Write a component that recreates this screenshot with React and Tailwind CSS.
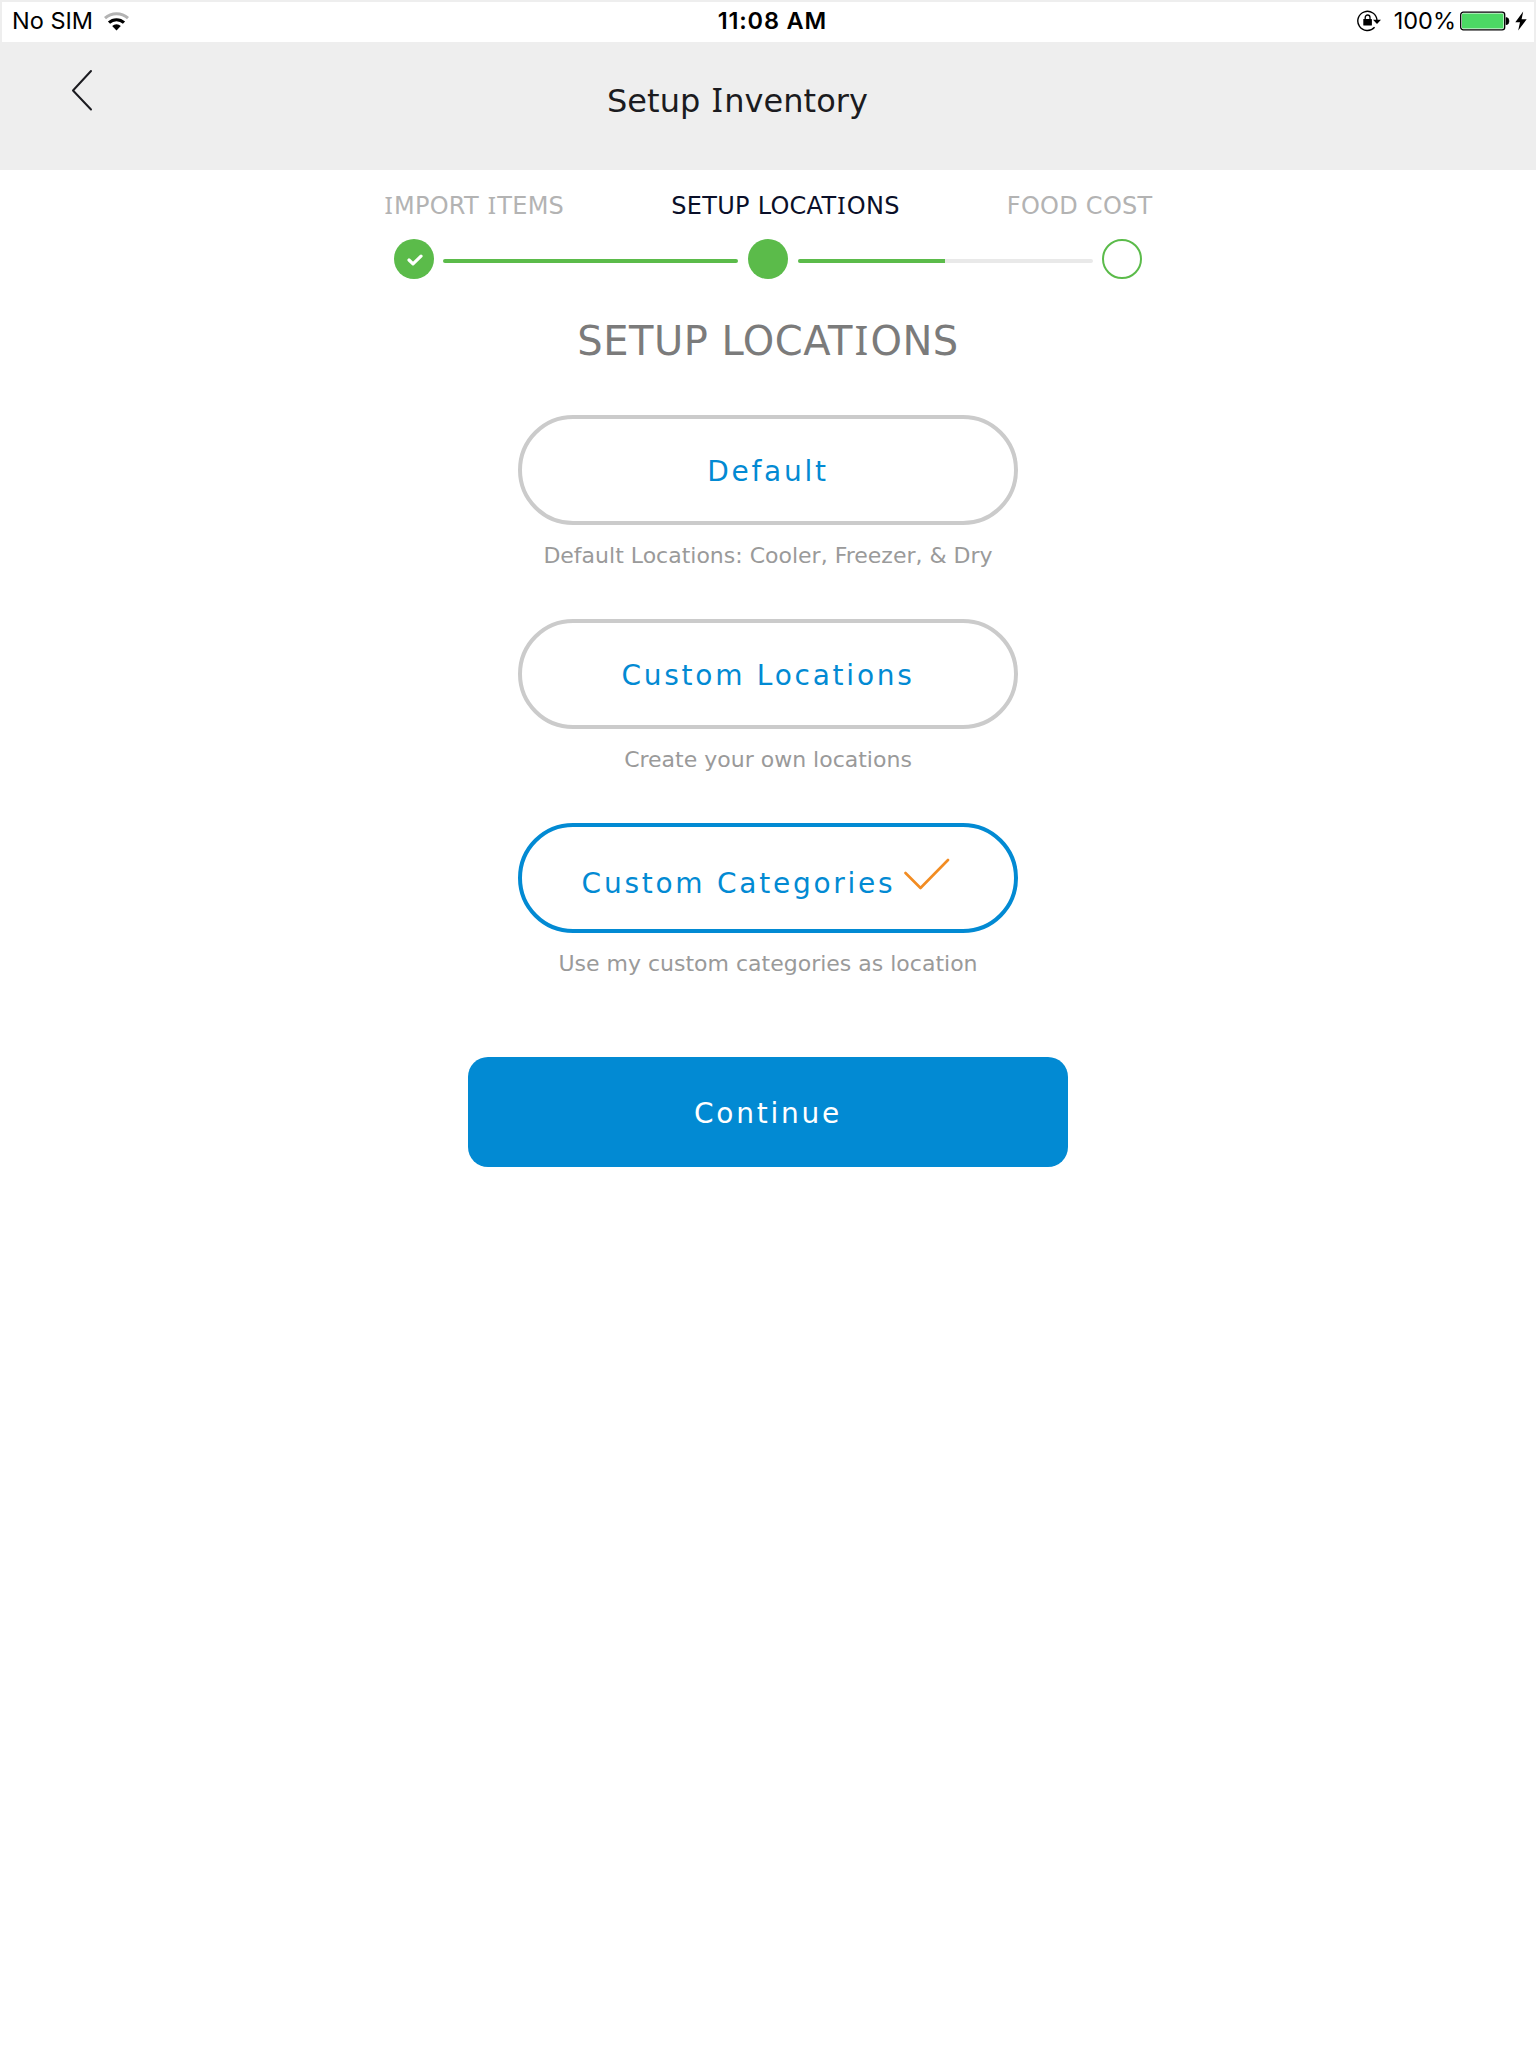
function Wifi() {
  return (
    <svg className="mb-[2px] ml-[11px] h-[19px] w-[25px]" viewBox="0 0 25 19" fill="none">
      <path d="M1 6.2A17 17 0 0 1 24 6.2" stroke="#b3b3b3" strokeWidth="3" />
      <path d="M5 10.7A11 11 0 0 1 20 10.7" stroke="#000" strokeWidth="3.2" />
      <path d="M12.5 18.5L8.2 14A6 6 0 0 1 16.8 14Z" fill="#000" />
    </svg>
  );
}

function RotationLock() {
  return (
    <svg className="mb-[2px] h-[22px] w-[24px]" viewBox="0 0 24 22" fill="none">
      <path d="M17.6 17.3A9.6 9.6 0 1 1 20 10.5" stroke="#000" strokeWidth="1.4" />
      <path d="M16 9.8H24L20 14Z" fill="#000" />
      <rect x="6.3" y="9" width="8.6" height="6.6" rx="0.6" fill="#000" />
      <path d="M8.2 9.5V7.4a2.4 2.4 0 0 1 4.8 0V9.5" stroke="#000" strokeWidth="1.3" />
    </svg>
  );
}

function Battery() {
  return (
    <svg className="mb-[2px] ml-[4px] h-[20px] w-[50px]" viewBox="0 0 50 20" fill="none">
      <rect x="0.7" y="1.2" width="44" height="17.6" rx="2.6" stroke="#000" strokeWidth="1.3" />
      <rect x="2" y="2.5" width="41.4" height="15" rx="1" fill="#4cd964" />
      <path d="M46 6.5a3 3.6 0 0 1 0 7.2Z" fill="#000" stroke="#000" strokeWidth="0.6" />
    </svg>
  );
}

function Bolt() {
  return (
    <svg className="mb-[2px] ml-[5px] h-[20px] w-[12px]" viewBox="0 0 12 20">
      <path d="M8.2 0.5L0.3 11.2H5L3.2 19.5L11.7 8.2H6.6Z" fill="#000" />
    </svg>
  );
}

function StatusBar() {
  return (
    <div className="mx-[2px] grid h-[40px] grid-cols-3 items-center bg-white font-['Inter',sans-serif] text-[23.5px] leading-[38px] text-black">
      <div className="flex items-center pl-[10px]">
        <span className="-mt-[2px]">No SIM</span>
        <Wifi />
      </div>
      <div className="-mt-[2px] pl-[205px] font-semibold tracking-[0.85px]">11:08 AM</div>
      <div className="flex items-center justify-end pr-[7px]">
        <RotationLock />
        <span className="-mt-[2px] ml-[13px]">100%</span>
        <Battery />
        <Bolt />
      </div>
    </div>
  );
}

function Slab({ children }) {
  return children.split(/(I)/).map((part, i) =>
    part === "I" ? (
      <span key={i} className="px-[0.038em] font-['Noto_Sans',sans-serif] text-[1.02em] leading-none">
        I
      </span>
    ) : (
      part
    )
  );
}

function Option({ label, note, selected }) {
  return (
    <div className="flex flex-col items-center">
      <button
        className={
          "flex h-[110px] w-[500px] items-start justify-center rounded-full border-4 text-[28px] leading-[36px] tracking-[2.75px] text-[#028ad3] " +
          (selected ? "border-[#028ad3] pt-[39px]" : "border-[#cbcbcb] pt-[35px]")
        }
      >
        <span>{label}</span>
        {selected && (
          <svg className="-mt-[8px] mr-[4px] ml-[9px] h-[32px] w-[46px]" viewBox="0 0 46 32" fill="none">
            <path d="M1.5 15L16.5 30L44 2" stroke="#f28c22" strokeWidth="2.6" strokeLinecap="round" strokeLinejoin="round" />
          </svg>
        )}
      </button>
      <p className="mt-[17px] text-[22px] leading-[28px] text-[#9a9a9a]">{note}</p>
    </div>
  );
}

export default function App() {
  return (
    <div className="min-h-[2048px] w-[1536px] bg-white font-['DejaVu_Sans',sans-serif] antialiased">
      <header className="h-[170px] bg-[#eeeeee] pt-[2px]">
        <StatusBar />
        <div className="flex h-[128px] items-start">
          <svg className="mt-[27px] ml-[71px] h-[42px] w-[22px]" viewBox="0 0 22 42" fill="none">
            <path d="M20 2L2 21.5L20 40.5" stroke="#1b1b20" strokeWidth="2" strokeLinecap="round" strokeLinejoin="round" />
          </svg>
          <h1 className="mt-[39px] ml-[514px] text-[32px] leading-[40px] tracking-[0.05px] whitespace-nowrap text-[#1b1b20]">
            <Slab>Setup Inventory</Slab>
          </h1>
        </div>
      </header>
      <main className="flex flex-col items-center">
        <div className="mt-5 flex h-[32px] w-[769px] justify-between text-[24px] leading-[32px] tracking-[0.27px] text-[#b3b3b3]">
          <span><Slab>IMPORT ITEMS</Slab></span>
          <span className="text-[#0a0f29]"><Slab>SETUP LOCATIONS</Slab></span>
          <span>FOOD COST</span>
        </div>
        <div className="mt-[17px] flex h-[40px] w-[748px] items-center">
          <div className="flex size-[40px] items-center justify-center rounded-full bg-[#5bbb4a]">
            <svg className="mt-px ml-px h-[12px] w-[16px]" viewBox="0 0 16 12" fill="none">
              <path d="M2 6L6 9.8L14 2.2" stroke="#fff" strokeWidth="3.2" strokeLinecap="round" strokeLinejoin="round" />
            </svg>
          </div>
          <div className="mt-1 mr-[10px] ml-[9px] h-1 w-[295px] rounded-full bg-[#5bbb4a]" />
          <div className="size-[40px] rounded-full bg-[#5bbb4a]" />
          <div className="mt-1 mr-[9px] ml-[10px] h-1 w-[295px] overflow-hidden rounded-full bg-[#e9e9e9]">
            <div className="h-1 w-[147px] bg-[#5bbb4a]" />
          </div>
          <div className="size-[40px] rounded-full border-2 border-[#5bbb4a]" />
        </div>
        <h2 className="mt-[38px] h-[48px] text-[40px] leading-[48px] tracking-[0.5px] text-[#7b7b7b]">
          <Slab>SETUP LOCATIONS</Slab>
        </h2>
        <div className="mt-[50px] flex flex-col gap-[49px]">
          <Option label="Default" note="Default Locations: Cooler, Freezer, & Dry" />
          <Option label="Custom Locations" note="Create your own locations" />
          <Option label="Custom Categories" note="Use my custom categories as location" selected />
        </div>
        <button className="mt-[79px] flex h-[110px] w-[600px] items-start justify-center rounded-[20px] bg-[#028ad3] pt-[39px] text-[28px] leading-[36px] tracking-[2.75px] text-white">
          Continue
        </button>
      </main>
    </div>
  );
}
